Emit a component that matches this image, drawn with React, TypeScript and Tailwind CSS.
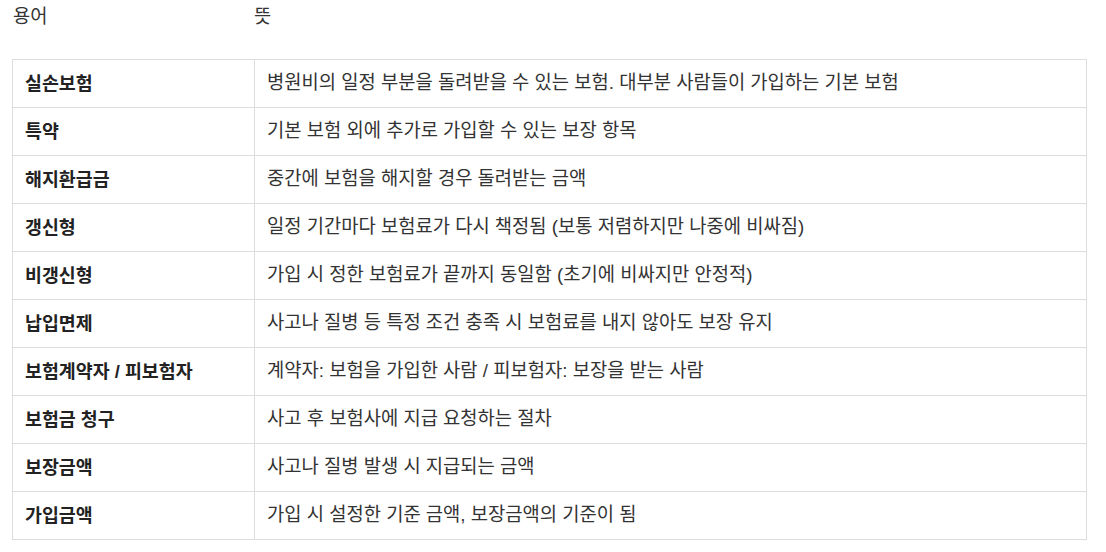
import React from "react";

const rows: [string, string][] = [
  ["실손보험", "병원비의 일정 부분을 돌려받을 수 있는 보험. 대부분 사람들이 가입하는 기본 보험"],
  ["특약", "기본 보험 외에 추가로 가입할 수 있는 보장 항목"],
  ["해지환급금", "중간에 보험을 해지할 경우 돌려받는 금액"],
  ["갱신형", "일정 기간마다 보험료가 다시 책정됨 (보통 저렴하지만 나중에 비싸짐)"],
  ["비갱신형", "가입 시 정한 보험료가 끝까지 동일함 (초기에 비싸지만 안정적)"],
  ["납입면제", "사고나 질병 등 특정 조건 충족 시 보험료를 내지 않아도 보장 유지"],
  ["보험계약자 / 피보험자", "계약자: 보험을 가입한 사람 / 피보험자: 보장을 받는 사람"],
  ["보험금 청구", "사고 후 보험사에 지급 요청하는 절차"],
  ["보장금액", "사고나 질병 발생 시 지급되는 금액"],
  ["가입금액", "가입 시 설정한 기준 금액, 보장금액의 기준이 됨"],
];

export default function App() {
  return (
    <div
      className="bg-white text-[#333] text-[18.75px] px-3"
      style={{ fontFamily: '"Liberation Sans", "Noto Sans CJK KR", sans-serif' }}
    >
      <div className="grid grid-cols-[243px_1fr] h-[34px] items-center">
        <div className="pl-px">용어</div>
        <div className="-ml-px">뜻</div>
      </div>
      <div className="mt-[25px] w-[1075px] border border-[#dddddd]">
        {rows.map(([term, desc], i) => (
          <div
            key={term}
            className={`grid grid-cols-[242px_1fr] ${i > 0 ? "h-[48px] border-t border-[#dddddd]" : "h-[47px]"}`}
          >
            <div className="flex items-center px-3 text-[18.4px] font-bold border-r border-[#dddddd] text-[#222]">
              {term}
            </div>
            <div className="flex items-center px-3">{desc}</div>
          </div>
        ))}
      </div>
    </div>
  );
}
